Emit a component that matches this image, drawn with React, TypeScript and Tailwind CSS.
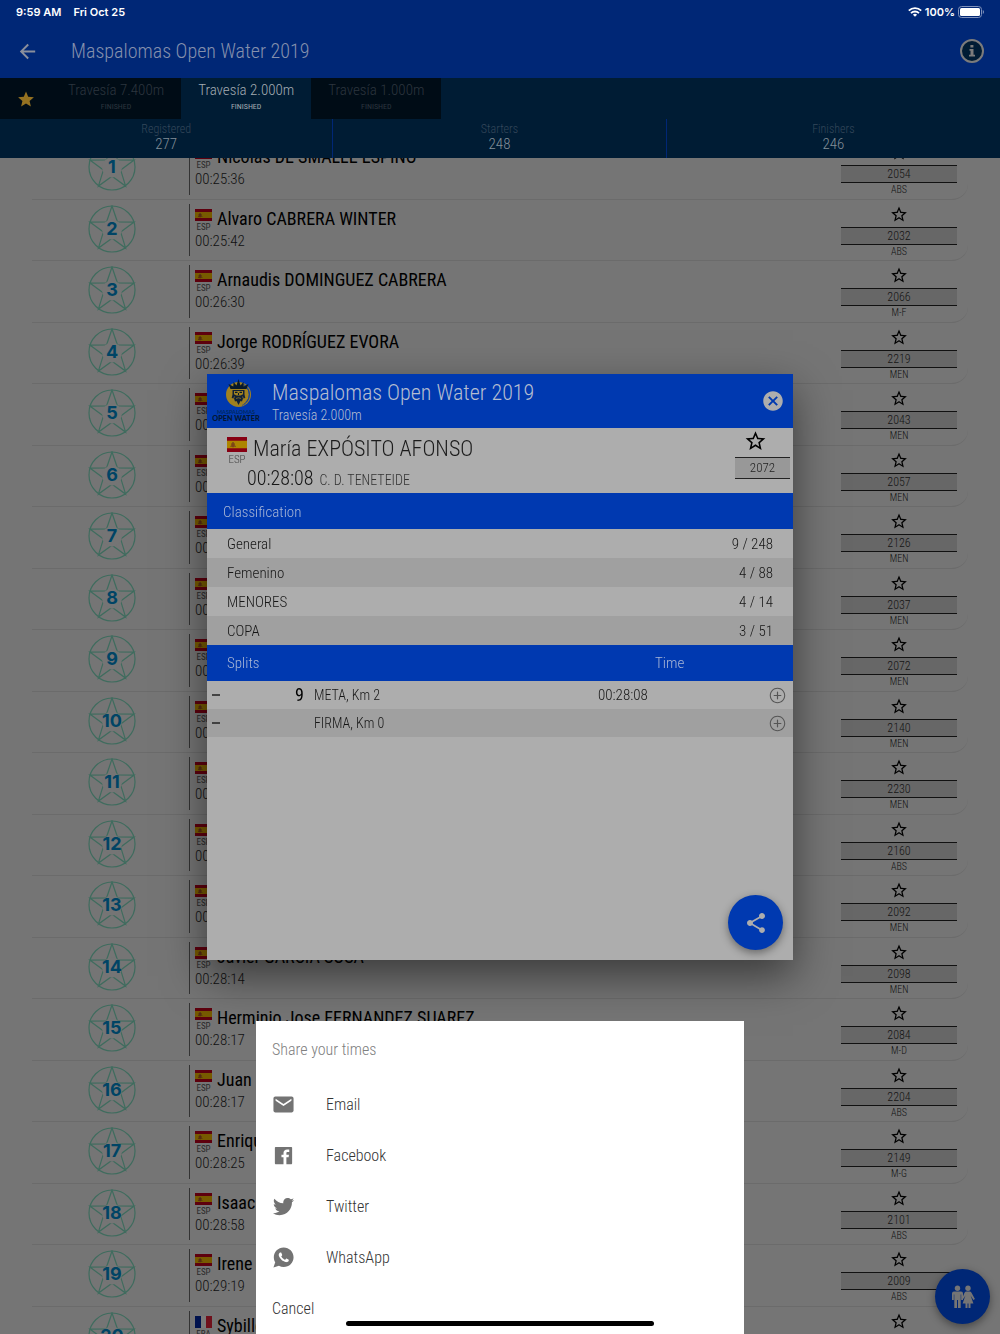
import {
  IoIosAddCircleOutline,
  IoLogoFacebook,
  IoLogoTwitter,
  IoLogoWhatsapp,
  IoMdArrowBack,
  IoMdCloseCircle,
  IoMdMail,
  IoMdShare,
  IoMdStar,
  IoMdStarOutline,
} from "react-icons/io";
import type { IconType } from "react-icons";

interface Tab {
  label: string;
  status: string;
  active?: boolean;
}

interface Racer {
  position: number;
  name: string;
  country: "ESP" | "FRA";
  time: string;
  bib: string;
  category: string;
}

const TABS: Tab[] = [
  { label: "Travesía 7.400m", status: "FINISHED" },
  { label: "Travesía 2.000m", status: "FINISHED", active: true },
  { label: "Travesía 1.000m", status: "FINISHED" },
];

const STATS = [
  { label: "Registered", value: 277 },
  { label: "Starters", value: 248 },
  { label: "Finishers", value: 246 },
];

const RACERS: Racer[] = [
  { position: 1, name: "Nicolás DE SMALLE ESPINO", country: "ESP", time: "00:25:36", bib: "2054", category: "ABS" },
  { position: 2, name: "Alvaro CABRERA WINTER", country: "ESP", time: "00:25:42", bib: "2032", category: "ABS" },
  { position: 3, name: "Arnaudis DOMINGUEZ CABRERA", country: "ESP", time: "00:26:30", bib: "2066", category: "M-F" },
  { position: 4, name: "Jorge RODRÍGUEZ EVORA", country: "ESP", time: "00:26:39", bib: "2219", category: "MEN" },
  { position: 5, name: "", country: "ESP", time: "00:27", bib: "2043", category: "MEN" },
  { position: 6, name: "", country: "ESP", time: "00:27", bib: "2057", category: "MEN" },
  { position: 7, name: "", country: "ESP", time: "00:27", bib: "2126", category: "MEN" },
  { position: 8, name: "", country: "ESP", time: "00:27", bib: "2037", category: "MEN" },
  { position: 9, name: "", country: "ESP", time: "00:28", bib: "2072", category: "MEN" },
  { position: 10, name: "", country: "ESP", time: "00:28", bib: "2140", category: "MEN" },
  { position: 11, name: "", country: "ESP", time: "00:28", bib: "2230", category: "MEN" },
  { position: 12, name: "", country: "ESP", time: "00:28", bib: "2160", category: "ABS" },
  { position: 13, name: "", country: "ESP", time: "00:28", bib: "2092", category: "MEN" },
  { position: 14, name: "Javier GARCIA SOSA", country: "ESP", time: "00:28:14", bib: "2098", category: "MEN" },
  { position: 15, name: "Herminio Jose FERNANDEZ SUAREZ", country: "ESP", time: "00:28:17", bib: "2084", category: "M-D" },
  { position: 16, name: "Juan", country: "ESP", time: "00:28:17", bib: "2204", category: "ABS" },
  { position: 17, name: "Enrique", country: "ESP", time: "00:28:25", bib: "2149", category: "M-G" },
  { position: 18, name: "Isaac", country: "ESP", time: "00:28:58", bib: "2101", category: "ABS" },
  { position: 19, name: "Irene", country: "ESP", time: "00:29:19", bib: "2009", category: "ABS" },
  { position: 20, name: "Sybille", country: "FRA", time: "", bib: "", category: "" },
];

const CLASSIFICATION = [
  { label: "General", value: "9 / 248" },
  { label: "Femenino", value: "4 / 88" },
  { label: "MENORES", value: "4 / 14" },
  { label: "COPA", value: "3 / 51" },
];

const SPLITS = [
  { position: "9", name: "META, Km 2", time: "00:28:08" },
  { position: "", name: "FIRMA, Km 0", time: "" },
];

const SHARE_OPTIONS: { label: string; Icon: IconType }[] = [
  { label: "Email", Icon: IoMdMail },
  { label: "Facebook", Icon: IoLogoFacebook },
  { label: "Twitter", Icon: IoLogoTwitter },
  { label: "WhatsApp", Icon: IoLogoWhatsapp },
];

function Flag({ country, bright, className }: { country: Racer["country"]; bright?: boolean; className: string }) {
  if (country === "FRA") {
    return (
      <svg viewBox="0 0 17 12" className={className} preserveAspectRatio="none" aria-hidden="true">
        <path d="M0 0h6v12H0z" fill="#00124e" />
        <path d="M6 0h5v12H6z" fill="#7a7a7a" />
        <path d="M11 0h6v12h-6z" fill="#6f101b" />
      </svg>
    );
  }
  return (
    <svg viewBox="0 0 17 12" className={className} preserveAspectRatio="none" aria-hidden="true">
      <path d="M0 0h17v12H0z" fill={bright ? "#870013" : "#5e000e"} />
      <path d="M0 3h17v6H0z" fill={bright ? "#ad8500" : "#775a00"} />
      <path d="M3.600 5h3v2.600l-1.500.8-1.500-.8z" fill={bright ? "#7e4417" : "#572c10"} />
      <path d="M4.400 4.200h1.400v1H4.400zM3 7h.7v1H3zM6.600 7h.7v1h-.7z" fill={bright ? "#6a3d22" : "#4a2a18"} />
    </svg>
  );
}

function PositionBadge({ position }: { position: number }) {
  return (
    <div className="relative flex size-12 items-center justify-center">
      <svg viewBox="0 0 48 48" className="absolute inset-0 size-full" fill="none" stroke="#3f6c5e" strokeWidth="1.200" aria-hidden="true">
        <circle cx="24" cy="24" r="23" />
        <path d="M24 1l5.400 15.800 16.700.3-13.400 10 4.900 16L24 33.300l-13.600 9.800 5-16-13.500-10 16.700-.3z" />
        <circle cx="24" cy="24.500" r="10" fill="#757575" stroke="none" />
      </svg>
      <span className="relative font-['Inter',sans-serif] text-lg font-bold text-[#004465]">{position}</span>
    </div>
  );
}

function RacerRow({ racer }: { racer: Racer }) {
  return (
    <li className="flex h-[61px] rounded-br-2xl border-b border-[#6b6b6b] odd:h-[62px]">
      <div className="flex w-[157px] shrink-0 justify-center pt-[5px] pl-[3px]">
        <PositionBadge position={racer.position} />
      </div>
      <div className="my-1 flex min-w-0 flex-1 flex-col border-l border-[#333] pt-1 pl-[5px]">
        <div className="flex items-start gap-[5px]">
          <div className="flex w-[17px] shrink-0 flex-col items-center pt-px">
            <Flag country={racer.country} className="h-3 w-[17px]" />
            <span className="text-[9px] leading-[12px] font-normal text-[#2a2a2a]">{racer.country}</span>
          </div>
          <h3 className="text-lg leading-[22px] font-normal whitespace-nowrap text-black">{racer.name}</h3>
        </div>
        <time className="text-[15px] leading-4 text-[#111]">{racer.time}</time>
      </div>
      <div className="mr-[11px] flex w-[116px] shrink-0 flex-col items-center pt-1">
        <button type="button" aria-label="Add to favourites" className="flex h-[23px] items-start text-black">
          <IoMdStarOutline className="size-5" />
        </button>
        <span className="flex h-[18px] w-full items-center justify-center border-y border-[#111] bg-[#676767] text-xs leading-4 text-[#151515]">
          {racer.bib}
        </span>
        <span className="text-[10px] leading-[14px] text-[#111]">{racer.category}</span>
      </div>
    </li>
  );
}

function StatusBar() {
  return (
    <div className="flex h-6 items-center justify-between px-4 font-['Inter',sans-serif] text-[11px] font-semibold text-white">
      <div className="flex gap-3">
        <span>9:59 AM</span>
        <span>Fri Oct 25</span>
      </div>
      <div className="flex items-center gap-[3px]">
        <svg viewBox="0 0 14 10" className="h-[10px] w-[14px]" fill="none" stroke="currentColor" strokeWidth="1.800" aria-hidden="true">
          <path d="M.8 3.700a9 9 0 0 1 12.400 0M3 6.100a5.800 5.800 0 0 1 8 0" />
          <path d="M7 9.800L4.900 7.700a3 3 0 0 1 4.200 0z" fill="currentColor" stroke="none" />
        </svg>
        <span>100%</span>
        <svg viewBox="0 0 26 12" className="h-3 w-[26px]" aria-hidden="true">
          <rect x=".5" y=".5" width="23" height="11" rx="3" fill="none" stroke="#8092bb" />
          <rect x="2" y="2" width="20" height="8" rx="1.500" fill="white" />
          <path d="M24.800 4v4q1.200-.6 1.200-2t-1.200-2z" fill="#8092bb" />
        </svg>
      </div>
    </div>
  );
}

function EventHeader() {
  return (
    <header className="relative z-10 bg-[#001c34]">
      <div className="bg-[#002776]">
        <StatusBar />
        <div className="flex h-[54px] items-center pr-4 pl-4">
          <button type="button" aria-label="Back" className="text-[#8a8f9c]">
            <IoMdArrowBack className="size-[23px]" />
          </button>
          <h1 className="ml-8 flex-1 text-xl text-[#8490ad]">Maspalomas Open Water 2019</h1>
          <button
            type="button"
            aria-label="Event information"
            className="flex size-6 items-center justify-center rounded-full border-2 border-[#7b7b7b] bg-[#001c34] text-[#7b7b7b]"
          >
            <svg viewBox="0 0 12 14" className="h-[14px] w-3" fill="currentColor" aria-hidden="true">
              <path d="M4.400 1h3v2.600h-3zM3.500 5h4v5.700H9v1.800H3v-1.800h1.500V6.800h-1z" />
            </svg>
          </button>
        </div>
      </div>
      <nav className="flex h-[41px]">
        <button type="button" aria-label="Favourites" className="flex w-[51px] items-center justify-center bg-[#000c16] text-[#957221]">
          <IoMdStar className="size-5" />
        </button>
        {TABS.map((tab) => (
          <button
            key={tab.label}
            type="button"
            className={
              tab.active
                ? "flex flex-col items-center px-[17px] pt-px text-[#a3abb2]"
                : "flex flex-col items-center bg-[#000c16] px-[17px] pt-px text-[#2c353e]"
            }
          >
            <span className="text-[15px] leading-[22px]">{tab.label}</span>
            <span className="text-[8px] leading-3 font-normal">{tab.status}</span>
          </button>
        ))}
      </nav>
      <dl className="grid h-[39px] grid-cols-3 divide-x divide-[#002776] text-center">
        {STATS.map((stat) => (
          <div key={stat.label} className="flex flex-col pt-1">
            <dt className="text-xs leading-[13px] text-[#34475a]">{stat.label}</dt>
            <dd className="text-[15px] leading-4 text-[#828e98]">{stat.value}</dd>
          </div>
        ))}
      </dl>
    </header>
  );
}

function EventLogo() {
  return (
    <svg viewBox="0 0 48 46" className="h-[46px] w-12" role="img" aria-label="Maspalomas Open Water">
      <circle cx="26.500" cy="16.500" r="12.500" fill="#a08120" />
      <path d="M30 5.500a12 12 0 0 1 0 22M32 7a11 11 0 0 1 0 19M34 9a10 10 0 0 1 0 15" fill="none" stroke="#0039b0" strokeWidth=".6" />
      <path d="M18.500 11l-2-5 4.800 2.500L21.500 4l3 3.500L26.500 1l2 6.500 3-3.500.2 4.500L36.500 6l-2 5z" fill="#06182c" />
      <path d="M20.500 12h12v4.500l.8 3.500-2.300.5-1 3-1.500-.5-2 4-2-4-1.500.5-1-3-2.300-.5.800-3.500z" fill="#102035" />
      <path d="M22 13h9v3.200l-2.500 1.300h-4L22 16.200z" fill="#a08120" />
      <path d="M23 13.800h2.500V15H23zM27.500 13.800H30V15h-2.500zM26 15h1v2h-1z" fill="#06182c" />
      <path d="M24 20.500q2.500-1.500 5 0M22.500 18.500l-.8 2M30.500 18.500l.8 2" fill="none" stroke="#a08120" strokeWidth=".7" />
      <text x="24" y="36" textAnchor="middle" fontFamily="Lato, sans-serif" fontWeight="700" fontSize="5.500" fill="#002860">MASPALOMAS</text>
      <text x="24" y="43" textAnchor="middle" fontFamily="Lato, sans-serif" fontWeight="900" fontSize="7.300" fill="#031733">OPEN WATER</text>
    </svg>
  );
}

function ResultDialog() {
  return (
    <div className="fixed inset-0 z-20 flex items-center justify-center">
      <section
        role="dialog"
        aria-label="Race result"
        className="relative h-[586px] w-[586px] max-w-full bg-[#adadad] text-[#161616] shadow-[0_16px_40px_rgba(0,0,0,0.5)]"
      >
        <header className="flex h-[54px] items-center bg-[#0039b0] pr-2 pl-[5px] text-[#b4bdd0]">
          <EventLogo />
          <div className="ml-3 flex-1 pt-1">
            <h2 className="text-[22px] leading-6">Maspalomas Open Water 2019</h2>
            <p className="text-[14px] leading-5">Travesía 2.000m</p>
          </div>
          <button type="button" aria-label="Close" className="text-[#adadad]">
            <IoMdCloseCircle className="size-6" />
          </button>
        </header>

        <div className="flex h-[65px]">
          <div className="flex-1 pl-5">
            <div className="flex gap-[6px] pt-2">
              <div className="flex w-5 flex-col items-center pt-px">
                <Flag country="ESP" bright className="h-[15px] w-5" />
                <span className="text-[11px] leading-4 text-[#444]">ESP</span>
              </div>
              <h3 className="text-[22px] leading-[26px] text-[#1c1c1c]">María EXPÓSITO AFONSO</h3>
            </div>
            <p className="flex items-baseline gap-[6px] pl-5 leading-5">
              <time className="text-xl leading-5">00:28:08</time>
              <span className="text-[14px] text-[#333]">C. D. TENETEIDE</span>
            </p>
          </div>
          <div className="mr-[3px] flex w-[55px] flex-col">
            <button type="button" aria-label="Add to favourites" className="flex h-[29px] items-start pl-2 text-black">
              <IoMdStarOutline className="size-[25px]" />
            </button>
            <span className="flex h-[22px] items-center justify-center border-y border-[#222] bg-[#989898] text-[13px] text-[#222]">
              2072
            </span>
          </div>
        </div>

        <table className="w-full text-[15px]">
          <thead>
            <tr className="h-9 bg-[#0039b0] text-left text-[#a8b6d6]">
              <th colSpan={2} className="pt-[2px] pl-4 font-light">Classification</th>
            </tr>
          </thead>
          <tbody>
            {CLASSIFICATION.map((row) => (
              <tr key={row.label} className="h-[29px] even:bg-[#a0a0a0]">
                <td className="pt-px pl-5">{row.label}</td>
                <td className="pt-px pr-5 text-right">{row.value}</td>
              </tr>
            ))}
          </tbody>
        </table>

        <table className="w-full table-fixed text-[15px]">
          <thead>
            <tr className="h-9 bg-[#0039b0] text-left text-[#a8b6d6]">
              <th colSpan={2} className="pl-5 font-light">Splits</th>
              <th className="w-[294px]" />
              <th className="w-[114px] pl-[57px] font-light">Time</th>
              <th className="w-[81px]" />
            </tr>
          </thead>
          <tbody>
            {SPLITS.map((split) => (
              <tr key={split.name} className="h-[28px] even:bg-[#a0a0a0]">
                <td className="pl-[5px]">
                  <svg viewBox="0 0 8 2" className="h-[2px] w-2" aria-hidden="true">
                    <path d="M0 1h8" stroke="#222" strokeWidth="1.500" />
                  </svg>
                </td>
                <td className="text-right text-lg leading-5 font-normal text-black">{split.position}</td>
                <td className="pl-[10px] text-[14px]">{split.name}</td>
                <td>{split.time}</td>
                <td className="pr-[6px]">
                  <button type="button" aria-label={`Details of ${split.name}`} className="ml-auto block text-[#555]">
                    <IoIosAddCircleOutline className="size-[19px]" />
                  </button>
                </td>
              </tr>
            ))}
          </tbody>
        </table>

        <button
          type="button"
          aria-label="Share"
          className="absolute right-[10px] bottom-[10px] flex size-[55px] items-center justify-center rounded-full bg-[#0039b0] text-[#adadad] shadow-[0_3px_8px_rgba(0,0,0,0.4)]"
        >
          <IoMdShare className="size-6" />
        </button>
      </section>
    </div>
  );
}

function ShareSheet() {
  return (
    <section className="fixed inset-x-0 bottom-0 z-30 mx-auto w-[488px] max-w-full bg-white px-4 text-base text-[#333]">
      <h2 className="flex h-[58px] items-center text-[#808080]">Share your times</h2>
      {SHARE_OPTIONS.map(({ label, Icon }) => (
        <button key={label} type="button" className="flex h-[51px] w-full items-center gap-[31px]">
          <Icon className="size-[23px] text-[#737373]" />
          {label}
        </button>
      ))}
      <button type="button" className="flex h-[51px] w-full items-center">
        Cancel
      </button>
    </section>
  );
}

export default function App() {
  return (
    <div className="relative flex h-screen flex-col overflow-hidden bg-[#757575] font-['Roboto_Condensed','Liberation_Sans',sans-serif] font-light">
      <EventHeader />
      <main className="min-h-0 flex-1 overflow-hidden">
        <ol className="-mt-5 mr-8 ml-8">
          {RACERS.map((racer) => (
            <RacerRow key={racer.position} racer={racer} />
          ))}
        </ol>
      </main>

      <button
        type="button"
        aria-label="Filter by gender"
        className="fixed right-[10px] bottom-[10px] z-10 flex size-[55px] items-center justify-center rounded-full bg-[#002776] text-[#757575] shadow-[0_3px_8px_rgba(0,0,0,0.4)]"
      >
        <svg viewBox="0 0 24 24" className="size-6" fill="currentColor" aria-hidden="true">
          <circle cx="6.500" cy="3.200" r="2.700" />
          <path d="M3 6.500h7q2 0 2 2V15h-1.800V9.500h-.5V23H7v-8H6v8H3.300V9.500h-.5V15H1V8.500q0-2 2-2z" />
          <circle cx="17" cy="3.200" r="2.700" />
          <path d="M15.500 6.500h3q1.400 0 2 1.200l3.400 6.300-1.500 1-2.800-4.500 2.800 8h-2.900V23h-2v-4.500h-1V23h-2v-4.500h-2.900l2.800-8L12.300 14l-.8-1.500 2-4.800q.6-1.200 2-1.200z" />
        </svg>
      </button>

      <ResultDialog />
      <ShareSheet />
      <div className="fixed inset-x-0 bottom-2 z-40 mx-auto h-[5px] w-[308px] rounded-full bg-black" />
    </div>
  );
}
